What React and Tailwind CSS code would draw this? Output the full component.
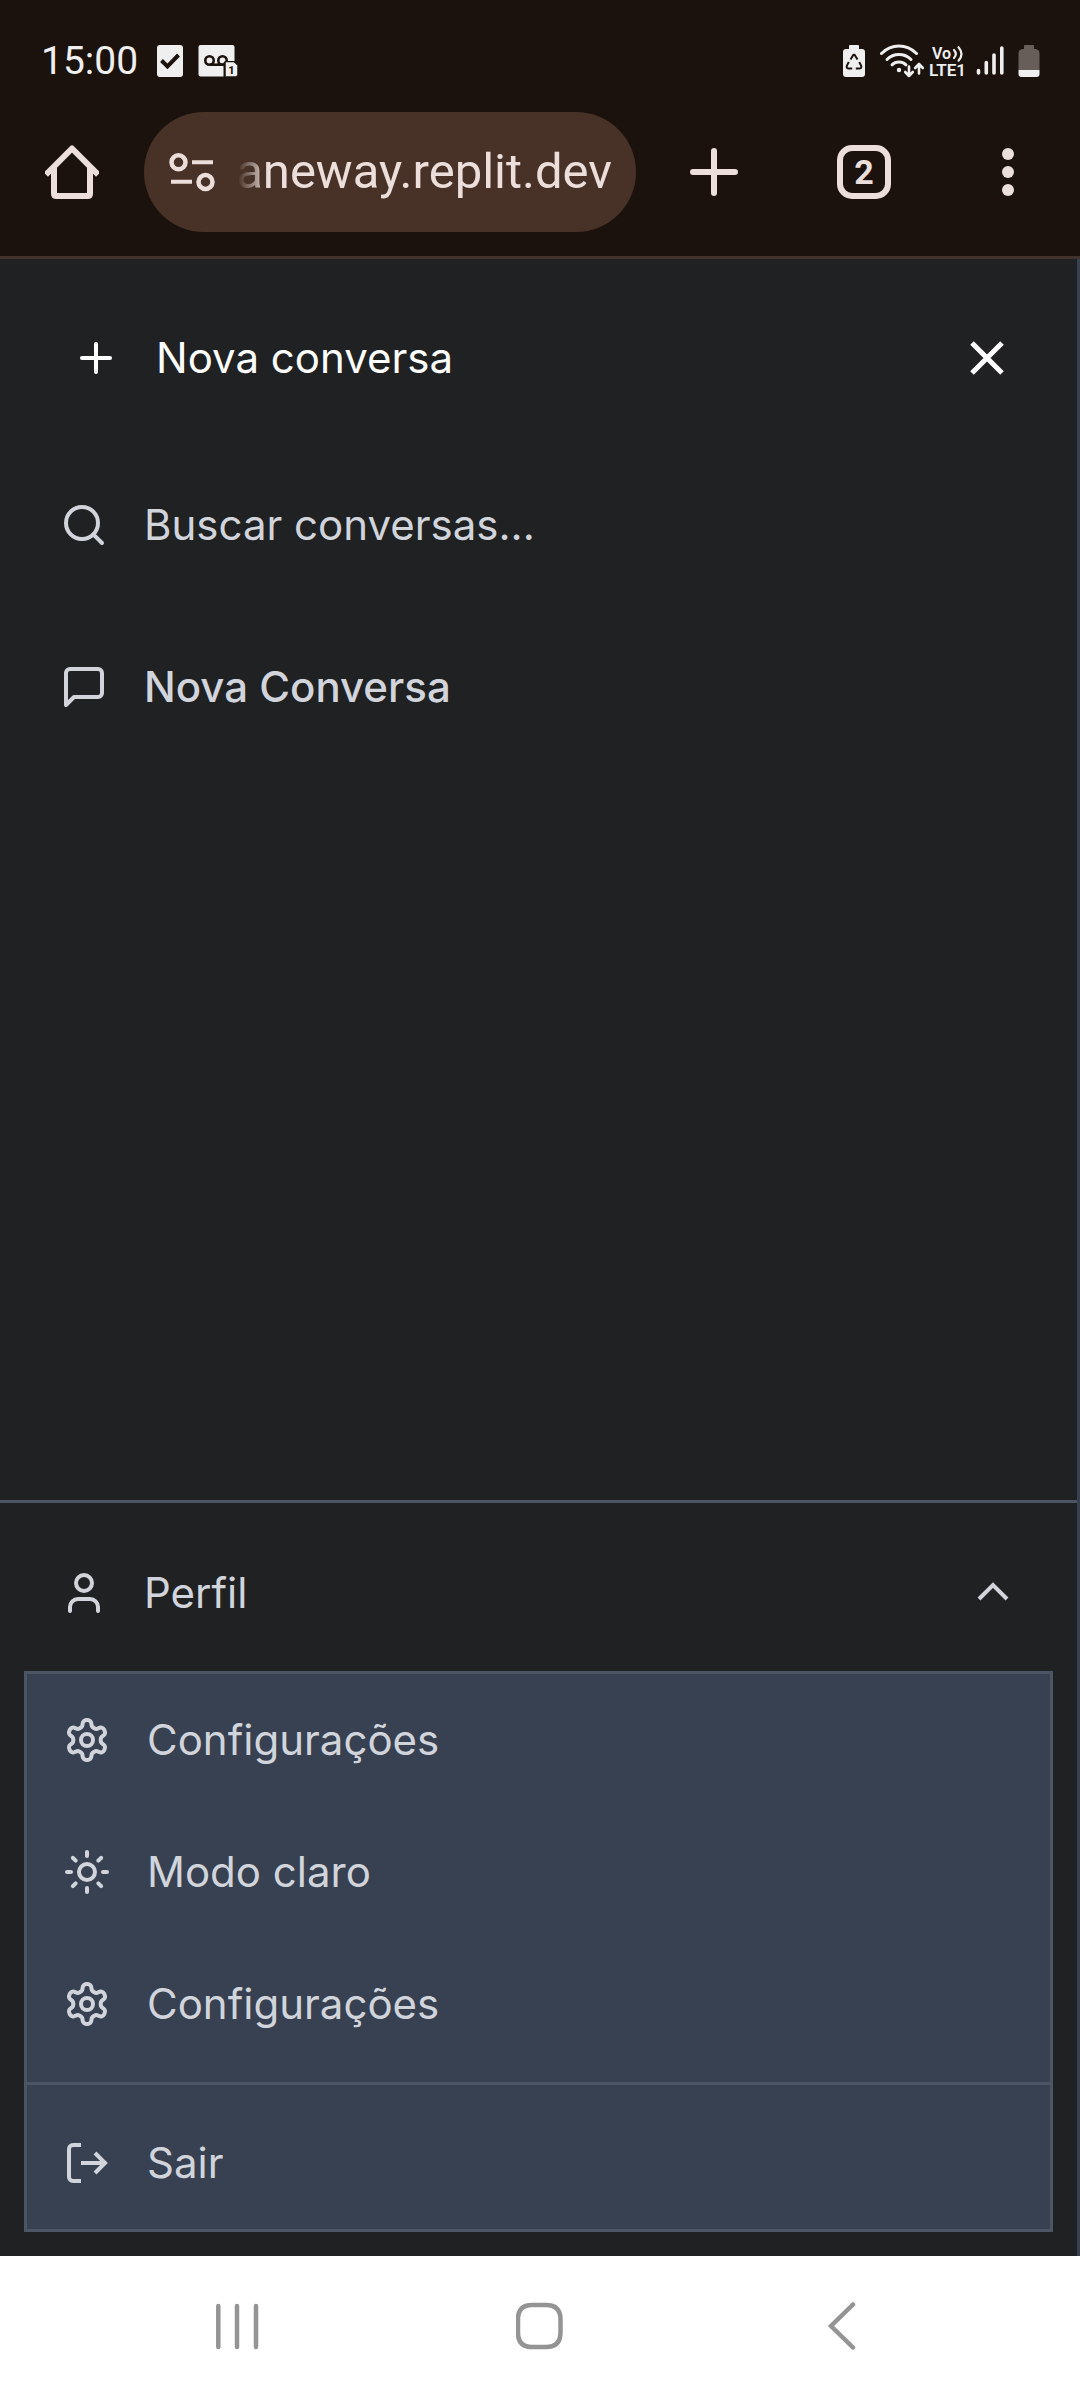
import React from "react";
import { Plus, Search, Sun, User } from "lucide-react";

function CheckNote() {
  return (
    <svg className="h-[34px] w-7" viewBox="0 0 28 34" aria-hidden="true">
      <rect x="1" y="1" width="26" height="32" rx="3" fill="#efefef" />
      <path d="M5.5 16.5l6 6L22.5 11" fill="none" stroke="#1b120d" strokeWidth="4" />
    </svg>
  );
}

function Voicemail() {
  return (
    <svg className="h-8 w-10" viewBox="0 0 40 32" aria-hidden="true">
      <path d="M2.5 0H34.5Q36.5 0 36.5 2V16H28Q25.5 16 25.5 18.5V31.5H2.5Q0.5 31.5 0.5 29.5V2Q0.5 0 2.5 0Z" fill="#efefef" />
      <g fill="none" stroke="#1b120d" strokeWidth="2.6">
        <circle cx="11.5" cy="15.5" r="4.2" />
        <circle cx="24.5" cy="15.5" r="4.2" />
        <path d="M11.5 19.7H26" />
      </g>
      <path d="M27.5 17H36L39.5 20.5V29.5Q39.5 31.5 37.5 31.5H27.5Z" fill="#efefef" stroke="#1b120d" strokeWidth="0.5" />
      <text x="33.3" y="28.5" textAnchor="middle" fontFamily="Roboto, sans-serif" fontWeight="800" fontSize="11" fill="#1b120d">1</text>
    </svg>
  );
}

function RecycleBattery() {
  return (
    <svg className="h-8 w-[22px]" viewBox="0 0 22 32" aria-hidden="true">
      <path d="M7 0h8q1 0 1 1v3h3q3 0 3 3v22q0 3-3 3H3q-3 0-3-3V7q0-3 3-3h3V1q0-1 1-1z" fill="#efefef" />
      <g fill="none" stroke="#1b120d" strokeWidth="2">
        <path d="M7.5 14.5l2.3-3.8q1.2-1.7 2.4 0l2.3 3.8" />
        <path d="M5.8 17l-1.9 3.6q-.9 2.6 1.5 2.9h3.8" />
        <path d="M16.2 17l1.9 3.6q.9 2.6-1.5 2.9h-3.8" />
      </g>
    </svg>
  );
}

function Wifi() {
  return (
    <svg className="h-[34px] w-11" viewBox="0 0 44 34" aria-hidden="true">
      <g fill="none" stroke="#efefef" strokeWidth="3" strokeLinecap="round">
        <path d="M1.5 9.5Q9 2 19 2t17.5 7.5" />
        <path d="M7 15.5q5-5 12-5t12 5" />
        <path d="M12 20.8q3-2.8 7-2.8t7 2.8" />
      </g>
      <circle cx="19" cy="26" r="2.2" fill="#efefef" />
      <g fill="none" stroke="#efefef" strokeWidth="2.6" strokeLinecap="round" strokeLinejoin="round">
        <path d="M29 22.5V32m-3.8-4L29 32l3.8-4" />
        <path d="M39 29.5V20m-3.8 4L39 20l3.8 4" />
      </g>
    </svg>
  );
}

function VoLte() {
  return (
    <svg className="h-9 w-10" viewBox="0 0 40 36" role="img" aria-label="VoLTE 1">
      <g fontFamily="Roboto, sans-serif" fontWeight="600" fill="#efefef">
        <text x="4" y="15.5" fontSize="16">Vo</text>
        <text x="1" y="32.5" fontSize="17">LTE1</text>
      </g>
      <g fill="none" stroke="#efefef" strokeWidth="2.2" strokeLinecap="round">
        <path d="M26 7q3.6 4 0 8" />
        <path d="M30.5 4.2q6 6.8 0 13.5" />
      </g>
    </svg>
  );
}

function Signal() {
  return (
    <svg className="h-8 w-7" viewBox="0 0 28 32" aria-hidden="true">
      <g stroke="#efefef" strokeWidth="3.6" strokeLinecap="round">
        <path d="M2.5 25.5V28M10.3 17.5V28M18 10V28M25.8 3V28" />
      </g>
    </svg>
  );
}

function Battery() {
  return (
    <svg className="h-8 w-[22px]" viewBox="0 0 22 32" aria-hidden="true">
      <path d="M7 0h8q1 0 1 1v3h2q3.5 1 3.5 4v17H0.5V8q0-3 3.5-4h2V1q0-1 1-1z" fill="#675e5a" />
      <path d="M0.5 25h21v4q0 3-3 3h-15q-3 0-3-3z" fill="#efefef" />
    </svg>
  );
}

function StatusBar() {
  return (
    <div className="flex h-[112px] items-center justify-between pt-2.5 pr-10 pl-[41px]">
      <div className="flex items-center">
        <span className="mr-[18px] font-[Roboto,sans-serif] text-[39px] leading-[48px] text-[#efefef]">15:00</span>
        <CheckNote />
        <span className="w-3.5" />
        <Voicemail />
      </div>
      <div className="flex items-center">
        <RecycleBattery />
        <span className="w-[15px]" />
        <Wifi />
        <span className="w-1" />
        <VoLte />
        <span className="w-2" />
        <Signal />
        <span className="w-3.5" />
        <Battery />
      </div>
    </div>
  );
}

function BrowserBar() {
  return (
    <div className="flex items-center border-b-3 border-[#42322d] pb-6 text-[#ecdfdb]">
      <button aria-label="Página inicial" className="flex w-36 shrink-0 justify-center">
        <svg className="h-[54px] w-[54px]" viewBox="0 0 54 54" fill="none" stroke="currentColor" strokeWidth="6">
          <path d="M3 27.5L27 3.5l24 24" strokeLinecap="square" strokeLinejoin="round" />
          <path d="M9 22v26.5Q9 51 11.5 51h31q2.5 0 2.5-2.5V22" />
        </svg>
      </button>
      <div className="flex h-[120px] min-w-0 flex-1 items-center rounded-full bg-[#483228] px-6">
        <svg className="h-12 w-12 shrink-0" viewBox="0 0 48 48" fill="none" stroke="currentColor" strokeWidth="4" aria-hidden="true">
          <circle cx="10.5" cy="14.3" r="7" strokeWidth="4.5" />
          <circle cx="37.5" cy="34" r="7" strokeWidth="4.5" />
          <path d="M24 14.3h21M3 33.7h21" />
        </svg>
        <input
          aria-label="Endereço"
          defaultValue="aneway.replit.dev"
          className="ml-4 min-w-0 flex-1 bg-transparent mask-l-from-[344px] mask-l-to-[374px] text-right font-[Roboto,sans-serif] text-[49px] leading-[60px] outline-none"
        />
      </div>
      <button aria-label="Nova guia" className="flex w-39 shrink-0 justify-center">
        <svg className="h-12 w-12" viewBox="0 0 48 48" stroke="currentColor" strokeWidth="6" strokeLinecap="round">
          <path d="M3 24h42M24 3v42" />
        </svg>
      </button>
      <button aria-label="Guias abertas" className="flex w-36 shrink-0 justify-center">
        <span className="flex h-[54px] w-[54px] items-center justify-center rounded-[15px] border-6 border-[#ecdfdb] font-[Roboto,sans-serif] text-[34px] leading-none font-bold">2</span>
      </button>
      <button aria-label="Menu" className="flex w-36 shrink-0 justify-center">
        <svg className="h-12 w-3" viewBox="0 0 12 48" fill="currentColor">
          <circle cx="6" cy="6" r="6" />
          <circle cx="6" cy="24" r="6" />
          <circle cx="6" cy="42" r="6" />
        </svg>
      </button>
    </div>
  );
}

function MessageSquare() {
  return (
    <svg className="h-12 w-12" viewBox="0 0 24 24" fill="none" stroke="currentColor" strokeWidth="2" strokeLinecap="round" strokeLinejoin="round" aria-hidden="true">
      <path d="M21 15a2 2 0 0 1-2 2H7l-4 4V5a2 2 0 0 1 2-2h14a2 2 0 0 1 2 2z" />
    </svg>
  );
}

function Gear() {
  return (
    <svg className="h-12 w-12" viewBox="0 0 24 24" fill="none" stroke="currentColor" strokeWidth="2" strokeLinecap="round" strokeLinejoin="round" aria-hidden="true">
      <path d="M12.22 2h-.44a2 2 0 0 0-2 2v.18a2 2 0 0 1-1 1.73l-.43.25a2 2 0 0 1-2 0l-.15-.08a2 2 0 0 0-2.73.73l-.22.38a2 2 0 0 0 .73 2.73l.15.1a2 2 0 0 1 1 1.72v.51a2 2 0 0 1-1 1.74l-.15.09a2 2 0 0 0-.73 2.73l.22.38a2 2 0 0 0 2.73.73l.15-.08a2 2 0 0 1 2 0l.43.25a2 2 0 0 1 1 1.73V20a2 2 0 0 0 2 2h.44a2 2 0 0 0 2-2v-.18a2 2 0 0 1 1-1.73l.43-.25a2 2 0 0 1 2 0l.15.08a2 2 0 0 0 2.73-.73l.22-.39a2 2 0 0 0-.73-2.73l-.15-.08a2 2 0 0 1-1-1.74v-.5a2 2 0 0 1 1-1.74l.15-.09a2 2 0 0 0 .73-2.73l-.22-.38a2 2 0 0 0-2.73-.73l-.15.08a2 2 0 0 1-2 0l-.43-.25a2 2 0 0 1-1-1.73V4a2 2 0 0 0-2-2z" />
      <circle cx="12" cy="12" r="3" />
    </svg>
  );
}

function ExitIcon() {
  return (
    <svg className="h-12 w-12" viewBox="0 0 24 24" fill="none" stroke="currentColor" strokeWidth="2" aria-hidden="true">
      <path d="M9 21H5a2 2 0 0 1-2-2V5a2 2 0 0 1 2-2h4" />
      <path d="M16 7l5 5-5 5M21 12H9" />
    </svg>
  );
}

function MenuItem({ icon, children }) {
  return (
    <button className="flex h-33 w-full items-center gap-9 px-9 text-left">
      {icon}
      <span>{children}</span>
    </button>
  );
}

function Sidebar() {
  return (
    <aside className="flex flex-1 flex-col border-r-3 border-[#374151] bg-[#202123] font-[Inter,sans-serif] text-[42px] leading-[60px] text-[#d1d5db]">
      <div className="flex items-center justify-between px-6 pt-9 text-white">
        <button className="flex h-[126px] items-center gap-9 px-12">
          <Plus size={48} />
          <span>Nova conversa</span>
        </button>
        <button aria-label="Fechar" className="px-9">
          <svg className="h-15 w-15" viewBox="0 0 24 24" stroke="currentColor" strokeWidth="2">
            <path d="M6 6l12 12M18 6L6 18" />
          </svg>
        </button>
      </div>
      <div className="mt-[38px] flex flex-col gap-[30px] px-6">
        <label className="flex h-33 items-center gap-9 px-9">
          <Search size={48} aria-hidden="true" />
          <input
            aria-label="Buscar conversas"
            placeholder="Buscar conversas..."
            className="min-w-0 flex-1 bg-transparent outline-none placeholder:text-[#d1d5db]"
          />
        </label>
        <button className="flex h-33 w-full items-center gap-9 px-9 text-left font-medium">
          <MessageSquare />
          <span>Nova Conversa</span>
        </button>
      </div>
      <div className="mt-auto border-t-3 border-[#4b5563] p-6">
        <button aria-expanded="true" className="flex h-33 w-full items-center gap-9 px-9 text-left">
          <User size={48} />
          <span className="flex-1">Perfil</span>
          <svg className="h-12 w-12" viewBox="0 0 24 24" fill="none" stroke="currentColor" strokeWidth="2" aria-hidden="true">
            <path d="M5 15l7-7 7 7" />
          </svg>
        </button>
        <nav className="mt-3 border-3 border-[#4b5563] bg-[#374151]">
          <MenuItem icon={<Gear />}>Configurações</MenuItem>
          <MenuItem icon={<Sun size={48} />}>Modo claro</MenuItem>
          <MenuItem icon={<Gear />}>Configurações</MenuItem>
          <div className="mt-3 border-t-3 border-[#4b5563] pt-3">
            <MenuItem icon={<ExitIcon />}>Sair</MenuItem>
          </div>
        </nav>
      </div>
    </aside>
  );
}

function NavigationBar() {
  return (
    <div className="grid h-36 grid-cols-3 items-center justify-items-center bg-white px-[85px] pb-1 text-[#949494]">
      <button aria-label="Recentes">
        <svg className="h-12 w-12" viewBox="0 0 48 48" stroke="currentColor" strokeWidth="4.5" strokeLinecap="round">
          <path d="M5.3 4v41M24 4v41M43 4v41" />
        </svg>
      </button>
      <button aria-label="Início">
        <svg className="h-12 w-12" viewBox="0 0 48 48" fill="none" stroke="currentColor" strokeWidth="4.5">
          <path d="M16 3h14Q44.5 3 44.5 17.5v13Q44.5 45 30 45H16Q2 45 2 30.5v-13Q2 3 16 3z" />
        </svg>
      </button>
      <button aria-label="Voltar">
        <svg className="h-12 w-12" viewBox="0 0 48 48" fill="none" stroke="currentColor" strokeWidth="4.5" strokeLinecap="round">
          <path d="M34 2.5L12 24l22 21.5" />
        </svg>
      </button>
    </div>
  );
}

export default function App() {
  return (
    <div className="flex min-h-screen flex-col bg-[#1b120d]">
      <header>
        <StatusBar />
        <BrowserBar />
      </header>
      <Sidebar />
      <NavigationBar />
    </div>
  );
}
